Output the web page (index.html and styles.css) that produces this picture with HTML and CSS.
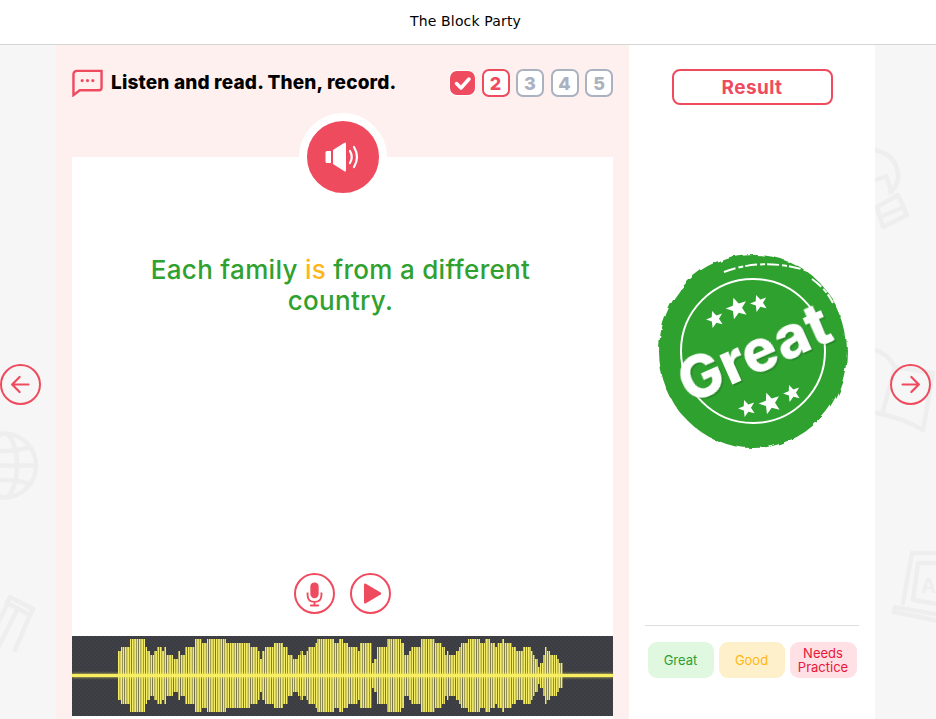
FILE: index.html
```html
<!DOCTYPE html>
<html lang="en">
<head>
    <meta charset="UTF-8">
    <meta name="viewport" content="width=device-width, initial-scale=1.0">
    <title>The Block Party</title>
    <link rel="stylesheet" href="styles.css">
</head>
<body>
    <header class="topbar">The Block Party</header>
    <div class="stage">
        <svg class="doodles" viewBox="0 0 936 675" fill="none" stroke="#eeeeee" stroke-width="4.500" stroke-linejoin="round" stroke-linecap="round">
            <!-- globe -->
            <circle cx="4" cy="420.500" r="32"/>
            <ellipse cx="4" cy="420.500" rx="13" ry="32"/>
            <path d="M-28 420.500h64M-22 402q26 8 52 0M-22 439q26-8 52 0"/>
            <!-- pencil -->
            <path d="M10 552l23 12-3 6-23-12zM8 558l-20 40M18 563l-20 40M30 570l-15 35"/>
            <!-- bulb -->
            <path d="M875 105q22 5 23 25 1 10-8 17M876 135l10-4 6 16M877 162l21-12 9 20-24 12zM880 172l24-10"/>
            <!-- book -->
            <path d="M875 305q12 3 20 17l38 6-10 57q-20-12-46-17M895 322l-12 44"/>
            <!-- laptop -->
            <path d="M912 508h30M912 508l-9 50M895 562l-1 5 45 9M895 562l45 8M918 518l-5 37M918 518h22M913 555l30 5"/>
            <text class="doodle-letter" x="921" y="548">A</text>
        </svg>

        <button class="nav nav-prev" type="button" aria-label="Previous">
            <svg viewBox="0 0 42 42"><path d="M30 21H12M20 12.500L11.500 21 20 29.500"/></svg>
        </button>

        <main class="lesson">
            <div class="lesson-head">
                <h2 class="lesson-title">
                    <svg class="chat-icon" viewBox="0 0 32 28">
                        <path d="M1.500 26.500V5.500q0-4 4-4H30.500V19q0 2.500-2.500 2.500H8z"/>
                        <circle cx="10.500" cy="11.500" r="1.600"/><circle cx="16" cy="11.500" r="1.600"/><circle cx="21.500" cy="11.500" r="1.600"/>
                    </svg>
                    Listen and read. Then, record.
                </h2>
                <ol class="steps">
                    <li class="step step-done">
                        <svg viewBox="0 0 24 24"><path d="M6 12.500l4.500 4.500L18.500 8"/></svg>
                    </li>
                    <li class="step step-current">2</li>
                    <li class="step">3</li>
                    <li class="step">4</li>
                    <li class="step">5</li>
                </ol>
            </div>

            <div class="card">
                <button class="speaker" type="button" aria-label="Play sentence">
                    <svg viewBox="0 0 72 72">
                        <path class="speaker-cone" d="M20 30h4v12h-4q-1.500 0-1.500-1.500v-9q0-1.500 1.500-1.500zM26 29l11-7q2-1.500 2 1v26q0 2.500-2 1l-11-7z"/>
                        <path class="speaker-wave" d="M43 30q3.500 6 0 12M47 26q6 10 0 20"/>
                    </svg>
                </button>
                <p class="sentence">Each family <span class="word-good">is</span> from a different country.</p>
                <div class="controls">
                    <button class="ctrl" type="button" aria-label="Record">
                        <svg viewBox="0 0 40 40">
                            <rect class="fill" x="15.500" y="8" width="9" height="17" rx="4.500"/>
                            <path class="line" d="M12.500 19v2.500q0 7.500 7.500 7.500t7.500-7.500V19M20 29v3.500"/>
                            <rect class="fill" x="15" y="32" width="10" height="2" rx="1"/>
                        </svg>
                    </button>
                    <button class="ctrl" type="button" aria-label="Play">
                        <svg viewBox="0 0 40 40"><path class="fill" d="M13 10.500q0-2 2-1l16 9.500q1.500 1 0 2l-16 9.500q-2 1-2-1z"/></svg>
                    </button>
                </div>
                <div class="wave">
                    <svg viewBox="0 0 541 80">
                        <defs>
                            <pattern id="bars" x="46" width="2.330" height="80" patternUnits="userSpaceOnUse">
                                <rect width="1.750" height="80" fill="#f6ee66"/>
                            </pattern>
                        </defs>
                        <path id="env" fill="url(#bars)" d="M46 40V15H49V11H58V3H73V11H75V15H78V19H82V15H85V11H90V15H92V11H94V19H101V23H106V15H108V19H113V11H123V3H130V7H135V3H154V7H178V11H186V15H188V23H190V15H193V11H202V7H211V11H216V19H221V23H226V19H228.500V15H231V19H234V15H236V11H243V7H245V3H262V7H267V3H271V7H276V11H286V15H288V7H300V27H302V23H305V11H315V3H329V7H332V19H337V15H339V11H349V3H363V7H370V11H373V19H375V15H377V19H384V15H387V11H389V7H396V3H408V7H413V3H418V7H423V11H425V7H430V3H432V7H440V11H444V15H451V11H459V15H461V19H463V23H466V31H468V27H471V19H473V11H475V15H478V19H485V23H487V27H491V40Z"/>
                        <use href="#env" transform="matrix(1 0 0 -1 0 79)"/>
                    </svg>
                    <div class="wave-line"></div>
                </div>
            </div>
        </main>

        <aside class="result">
            <div class="result-label">Result</div>
            <div class="stamp-wrap">
                <svg class="stamp" viewBox="0 0 200 200">
                    <defs>
                        <filter id="rough" x="-10%" y="-10%" width="120%" height="120%">
                            <feTurbulence type="fractalNoise" baseFrequency="0.06" numOctaves="3" seed="4"/>
                            <feDisplacementMap in="SourceGraphic" scale="6"/>
                        </filter>
                    </defs>
                    <ellipse cx="101" cy="100" rx="94" ry="97" fill="#2fa12f" filter="url(#rough)"/>
                    <path class="stamp-scratch" d="M72 21q40-15 84-1M160 28q14 10 21 24"/>
                    <circle class="stamp-ring" cx="101" cy="100" r="72"/>
                    <g class="stamp-stars">
                        <polygon id="s1" points="0,-9 2.600,-3 9,-2.800 4,1.300 5.600,8 0,4.300 -5.600,8 -4,1.300 -9,-2.800 -2.600,-3"/>
                        <use href="#s1" transform="translate(63 68) scale(.95) rotate(-20)"/>
                        <use href="#s1" transform="translate(85 57) scale(1.200) rotate(-20)"/>
                        <use href="#s1" transform="translate(107 52) scale(.95) rotate(-20)"/>
                        <use href="#s1" transform="translate(95 157) scale(.95) rotate(-20)"/>
                        <use href="#s1" transform="translate(118 152) scale(1.200) rotate(-20)"/>
                        <use href="#s1" transform="translate(140 142) scale(.95) rotate(-20)"/>
                    </g>
                    <text class="stamp-text" x="102" y="101" transform="rotate(-24 102 101)">Great</text>
                </svg>
            </div>
            <div class="legend">
                <span class="legend-item legend-great">Great</span>
                <span class="legend-item legend-good">Good</span>
                <span class="legend-item legend-needs">Needs Practice</span>
            </div>
        </aside>

        <button class="nav nav-next" type="button" aria-label="Next">
            <svg viewBox="0 0 42 42"><path d="M12 21h18M22 12.500l8.500 8.500-8.500 8.500"/></svg>
        </button>
    </div>
</body>
</html>
```
FILE: styles.css
```css
* {
    margin: 0;
    padding: 0;
    box-sizing: border-box;
}

html, body {
    height: 100%;
    overflow: hidden;
}

body {
    background-color: #f6f6f6;
    font-family: Inter, "Liberation Sans", sans-serif;
    color: #000;
}

.topbar {
    height: 45px;
    padding: 0 5px 2px 0;
    background-color: #fff;
    border-bottom: 1px solid #d5d5d5;
    display: flex;
    align-items: center;
    justify-content: center;
    font-family: "DejaVu Sans", sans-serif;
    font-size: 14px;
    letter-spacing: 0.15px;
}

.stage {
    position: relative;
    display: flex;
    height: 674px;
    padding-left: 56px;
}

.doodles {
    position: absolute;
    left: 0;
    top: 0;
    width: 936px;
    height: 675px;
}

.doodle-letter {
    font-size: 20px;
    font-weight: 700;
    fill: #eeeeee;
    stroke: none;
}

.nav {
    position: absolute;
    top: 319px;
    width: 41px;
    height: 41px;
    border: 0;
    background: none;
}

.nav svg {
    display: block;
    width: 41px;
    height: 41px;
    border: 2.500px solid #ef4b5f;
    border-radius: 50%;
}

.nav path {
    fill: none;
    stroke: #ef4b5f;
    stroke-width: 2.500;
    stroke-linecap: round;
    stroke-linejoin: round;
}

.nav-prev { left: 0; }
.nav-next { left: 890px; }

.lesson {
    position: relative;
    width: 573px;
    padding: 0 16px;
    background-color: #fff0f0;
    display: flex;
    flex-direction: column;
}

.lesson-head {
    height: 112px;
    padding-top: 24px;
    display: flex;
    justify-content: space-between;
    align-items: flex-start;
}

.lesson-title {
    display: flex;
    align-items: center;
    gap: 8px;
    font-size: 19px;
    font-weight: 800;
    line-height: 26px;
    letter-spacing: 0.17px;
}

.chat-icon {
    width: 31px;
    height: 28px;
    flex: none;
}

.chat-icon path {
    fill: none;
    stroke: #ef4b5f;
    stroke-width: 2.500;
}

.chat-icon circle {
    fill: #ef4b5f;
}

.steps {
    list-style: none;
    display: flex;
    gap: 6.500px;
}

.step {
    width: 28px;
    height: 28px;
    border: 2px solid #aab2c0;
    border-radius: 7px;
    background-color: #fff;
    color: #aab2c0;
    font-size: 18px;
    font-weight: 800;
    display: flex;
    align-items: center;
    justify-content: center;
}

.step-done {
    width: 25px;
    height: 24px;
    margin-top: 2px;
    border: 0;
    background-color: #ef4b5f;
    box-shadow: 0 0 0 1px #fff;
}

.step-done svg {
    width: 25px;
    height: 24px;
}

.step-done path {
    fill: none;
    stroke: #fff;
    stroke-width: 3.500;
    stroke-linecap: round;
    stroke-linejoin: round;
}

.step-current {
    border-color: #ef4b5f;
    color: #ef4b5f;
}

.card {
    position: relative;
    flex: 1;
    background-color: #fff;
    display: flex;
    flex-direction: column;
    padding-bottom: 3px;
}

.speaker {
    position: absolute;
    left: 227px;
    top: -44px;
    width: 88px;
    height: 88px;
    border: 8px solid #fff;
    border-radius: 50%;
    background-color: #ef4b5f;
}

.speaker svg {
    display: block;
    width: 72px;
    height: 72px;
}

.speaker-cone {
    fill: #fff;
}

.speaker-wave {
    fill: none;
    stroke: #fff;
    stroke-width: 2.200;
    stroke-linecap: round;
}

.sentence {
    margin-top: 97px;
    padding: 0 73px 0 69px;
    flex: 1;
    text-align: center;
    font-size: 26px;
    font-weight: 500;
    line-height: 31px;
    letter-spacing: 0.3px;
    color: #2fa12f;
}

.word-good {
    color: #ffb619;
}

.controls {
    display: flex;
    justify-content: center;
    gap: 15px;
    margin-bottom: 22px;
}

.ctrl {
    width: 41px;
    height: 41px;
    border: 2px solid #ef4b5f;
    border-radius: 50%;
    background-color: #fff;
}

.ctrl svg {
    display: block;
    width: 37px;
    height: 37px;
}

.ctrl .fill {
    fill: #ef4b5f;
}

.ctrl .line {
    fill: none;
    stroke: #ef4b5f;
    stroke-width: 2;
}

.wave {
    position: relative;
    height: 80px;
    background-color: #3c3d43;
    background-image: repeating-conic-gradient(#3c3d43 0 25%, #404147 0 50%);
    background-size: 4px 4px;
}

.wave svg {
    display: block;
    width: 100%;
    height: 80px;
}

.wave-line {
    position: absolute;
    left: 0;
    right: 0;
    top: 38px;
    height: 3px;
    background-color: #f8ee62;
    box-shadow: 0 0 3px #f8ee62;
}

.result {
    position: relative;
    width: 246px;
    padding: 0 16px;
    background-color: #fff;
    display: flex;
    flex-direction: column;
}

.result-label {
    width: 161px;
    height: 36px;
    margin: 24px auto 0;
    border: 2px solid #ef4b5f;
    border-radius: 8px;
    color: #ef4b5f;
    font-size: 19px;
    font-weight: 700;
    letter-spacing: 0.4px;
    display: flex;
    align-items: center;
    justify-content: center;
}

.stamp-wrap {
    flex: 1;
    display: flex;
    justify-content: center;
    padding-top: 146px;
}

.stamp {
    width: 200px;
    height: 200px;
}

.stamp-ring {
    fill: none;
    stroke: #fff;
    stroke-width: 2;
}

.stamp-scratch {
    fill: none;
    stroke: #fff;
    stroke-width: 2;
    stroke-dasharray: 12 3 5 2;
}

.stamp-stars {
    fill: #fff;
}

.stamp-text {
    fill: #fff;
    font-family: Inter, sans-serif;
    font-size: 58px;
    font-weight: 800;
    letter-spacing: 0.5px;
    text-anchor: middle;
    dominant-baseline: central;
    filter: drop-shadow(1px 2px 0 rgba(0, 0, 0, 0.15));
}

.legend {
    border-top: 1px solid #dedede;
    margin-bottom: 41px;
    padding-top: 16px;
    display: flex;
    justify-content: center;
    gap: 5px;
}

.legend-item {
    width: 66px;
    height: 36px;
    border-radius: 9px;
    display: flex;
    align-items: center;
    justify-content: center;
    text-align: center;
    font-size: 13px;
    line-height: 14px;
}

.legend-great { background-color: #e0f7e0; color: #2fa12f; }
.legend-good { background-color: #fff0cc; color: #ffb619; }
.legend-needs { width: 67px; background-color: #ffe0e4; color: #e8173a; }
```
